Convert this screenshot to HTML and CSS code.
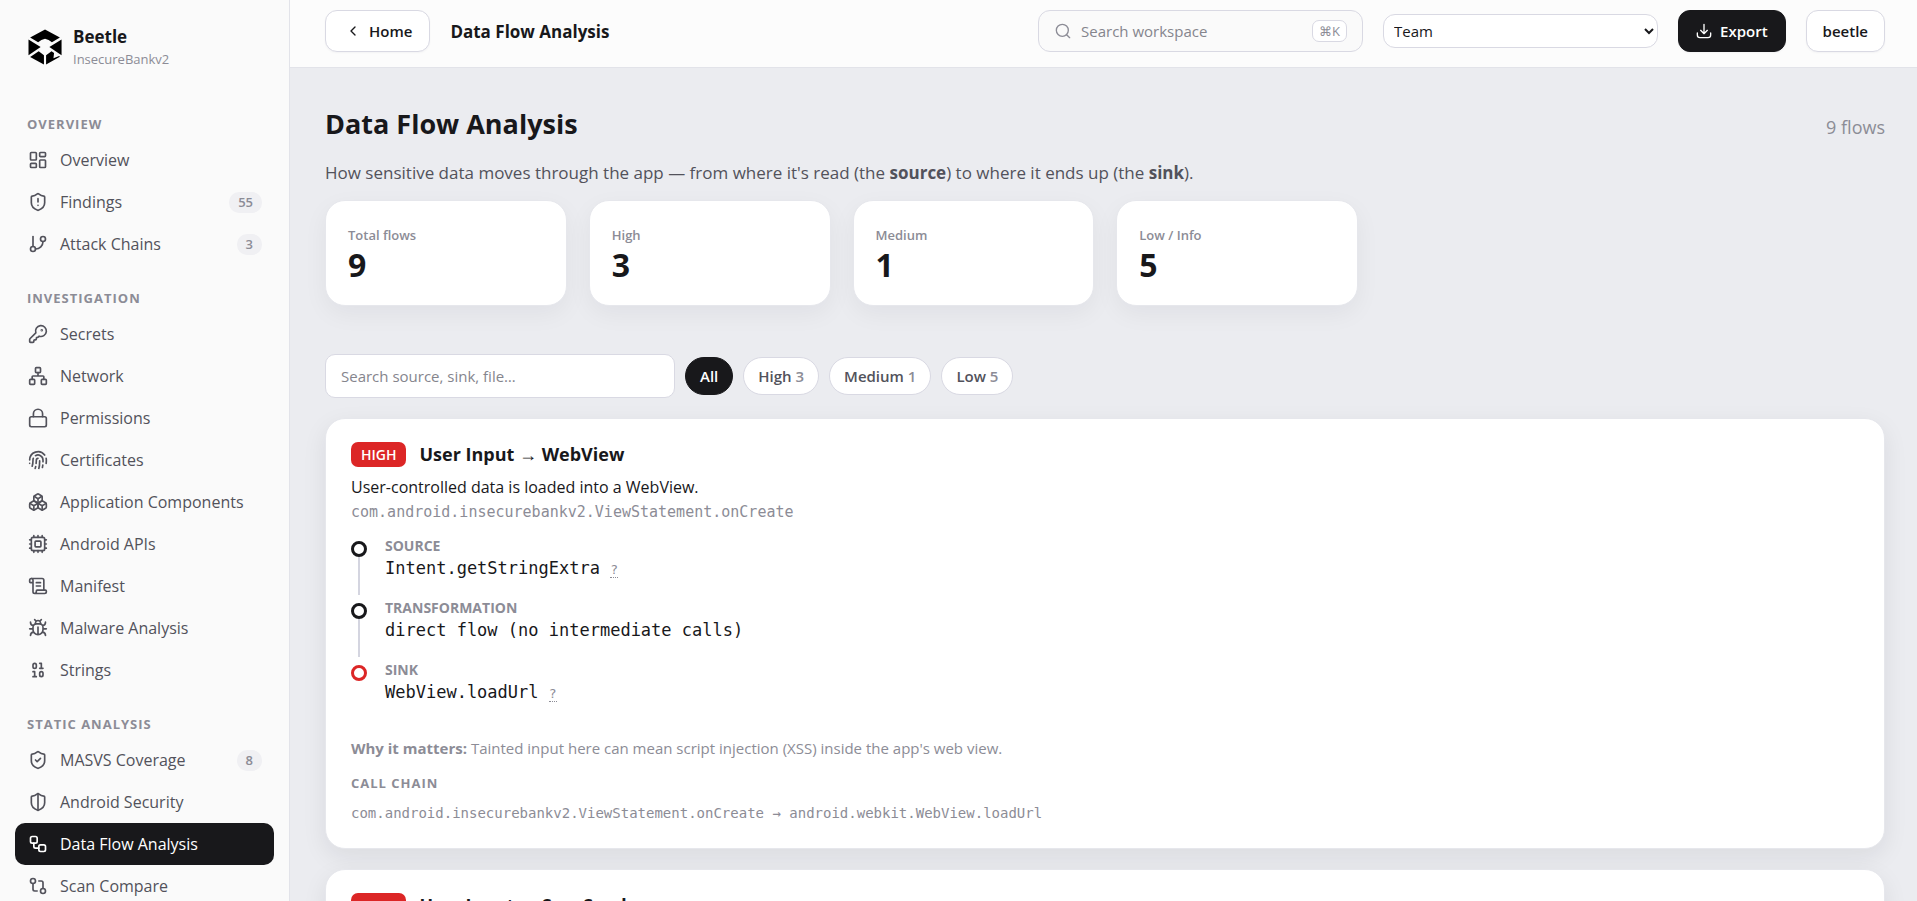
FILE: index.html
```html
<!DOCTYPE html>
<html lang="en">
<head>
<meta charset="UTF-8">
<meta name="viewport" content="width=device-width, initial-scale=1.0">
<title>Beetle - Data Flow Analysis</title>
<link rel="stylesheet" href="styles.css">
</head>
<body>
  <aside class="sidebar">
    <div class="brand">
      <svg class="brand-logo" viewBox="0 0 36 36" aria-hidden="true">
        <path d="M2.2 8.2 17.5 0l15.3 8.2-8.2 5-3.4-2.4-3.7-1.3-3.7 1.3-3.4 2.4z"/>
        <path d="M.5 10.4 13 18 .5 26.6z"/>
        <path d="M34.5 10.4 22 18l12.500 8.600z"/>
        <path d="M2.200 28.200 11 22.400l5.400 4.200V36z"/>
        <path d="M18.600 36v-9.400l5.600-4.200 2.600 1.800-.6 5.300 5.800-2.300.8.800z"/>
      </svg>
      <div>
        <div class="brand-name">Beetle</div>
        <div class="brand-app">InsecureBankv2</div>
      </div>
    </div>

    <nav>
      <h2 class="nav-label">Overview</h2>
      <a class="nav-item" href="#">
        <svg class="icon" viewBox="0 0 24 24"><rect width="7" height="9" x="3" y="3" rx="1"/><rect width="7" height="5" x="14" y="3" rx="1"/><rect width="7" height="9" x="14" y="12" rx="1"/><rect width="7" height="5" x="3" y="16" rx="1"/></svg>
        <span>Overview</span>
      </a>
      <a class="nav-item" href="#">
        <svg class="icon" viewBox="0 0 24 24"><path d="M20 13c0 5-3.500 7.500-7.660 8.950a1 1 0 0 1-.67-.01C7.500 20.500 4 18 4 13V6a1 1 0 0 1 1-1c2 0 4.500-1.200 6.240-2.720a1.170 1.170 0 0 1 1.520 0C14.510 3.810 17 5 19 5a1 1 0 0 1 1 1z"/><path d="M12 8v4M12 16h.01"/></svg>
        <span>Findings</span>
        <span class="count">55</span>
      </a>
      <a class="nav-item" href="#">
        <svg class="icon" viewBox="0 0 24 24"><path d="M6 3v12"/><circle cx="18" cy="6" r="3"/><circle cx="6" cy="18" r="3"/><path d="M18 9a9 9 0 0 1-9 9"/></svg>
        <span>Attack Chains</span>
        <span class="count">3</span>
      </a>

      <h2 class="nav-label">Investigation</h2>
      <a class="nav-item" href="#">
        <svg class="icon" viewBox="0 0 24 24"><path d="M2.586 17.414A2 2 0 0 0 2 18.828V21a1 1 0 0 0 1 1h3a1 1 0 0 0 1-1v-1a1 1 0 0 1 1-1h1a1 1 0 0 0 1-1v-1a1 1 0 0 1 1-1h.172a2 2 0 0 0 1.414-.586l.814-.814a6.500 6.500 0 1 0-4-4z"/><circle cx="16.500" cy="7.500" r=".5"/></svg>
        <span>Secrets</span>
      </a>
      <a class="nav-item" href="#">
        <svg class="icon" viewBox="0 0 24 24"><rect x="16" y="16" width="6" height="6" rx="1"/><rect x="2" y="16" width="6" height="6" rx="1"/><rect x="9" y="2" width="6" height="6" rx="1"/><path d="M5 16v-3a1 1 0 0 1 1-1h12a1 1 0 0 1 1 1v3M12 12V8"/></svg>
        <span>Network</span>
      </a>
      <a class="nav-item" href="#">
        <svg class="icon" viewBox="0 0 24 24"><rect width="20" height="12" x="2" y="10.500" rx="2"/><path d="M6.500 10.500V7a5.500 5.500 0 0 1 11 0v3.500"/></svg>
        <span>Permissions</span>
      </a>
      <a class="nav-item" href="#">
        <svg class="icon" viewBox="0 0 24 24"><path d="M12 10a2 2 0 0 0-2 2c0 1.020-.1 2.510-.26 4M14 13.120c0 2.380 0 6.380-1 8.880M17.290 21.020c.12-.6.43-2.300.5-3.020M2 12a10 10 0 0 1 18-6M2 16h.01M21.800 16c.2-2 .131-5.354 0-6M5 19.500C5.500 18 6 15 6 12a6 6 0 0 1 .34-2M8.650 22c.21-.66.45-1.320.57-2M9 6.800a6 6 0 0 1 9 5.200v2"/></svg>
        <span>Certificates</span>
      </a>
      <a class="nav-item" href="#">
        <svg class="icon" viewBox="0 0 24 24"><path d="M2.970 12.920A2 2 0 0 0 2 14.630v3.240a2 2 0 0 0 .97 1.710l3 1.800a2 2 0 0 0 2.060 0L12 19v-5.500l-5-3-4.030 2.420Z"/><path d="m7 16.500-4.740-2.850M7 16.500l5-3M7 16.500v5.170"/><path d="M12 13.500V19l3.970 2.380a2 2 0 0 0 2.060 0l3-1.800a2 2 0 0 0 .97-1.710v-3.240a2 2 0 0 0-.97-1.710L17 10.500l-5 3Z"/><path d="m17 16.500-5-3M17 16.500l4.740-2.850M17 16.500v5.170"/><path d="M7.970 4.420A2 2 0 0 0 7 6.130v4.370l5 3 5-3V6.130a2 2 0 0 0-.97-1.710l-3-1.800a2 2 0 0 0-2.060 0l-3 1.800Z"/><path d="M12 8 7.260 5.150M12 8l4.740-2.850M12 13.500V8"/></svg>
        <span>Application Components</span>
      </a>
      <a class="nav-item" href="#">
        <svg class="icon" viewBox="0 0 24 24"><rect x="4" y="4" width="16" height="16" rx="2"/><rect x="8.500" y="8.500" width="7" height="7" rx="1"/><path d="M17 20v2M17 2v2M12 20v2M12 2v2M7 20v2M7 2v2M2 12h2M2 17h2M2 7h2M20 12h2M20 17h2M20 7h2"/></svg>
        <span>Android APIs</span>
      </a>
      <a class="nav-item" href="#">
        <svg class="icon" viewBox="0 0 24 24"><path d="M15 12h-5M15 8h-5M19 17V5a2 2 0 0 0-2-2H4"/><path d="M8 21h12a2 2 0 0 0 2-2v-1a1 1 0 0 0-1-1H11a1 1 0 0 0-1 1v1a2 2 0 1 1-4 0V5a2 2 0 1 0-4 0v2a1 1 0 0 0 1 1h3"/></svg>
        <span>Manifest</span>
      </a>
      <a class="nav-item" href="#">
        <svg class="icon" viewBox="0 0 24 24"><path d="m8 2 1.880 1.880M14.120 3.880 16 2M9 7.130v-1a3.003 3.003 0 1 1 6 0v1"/><path d="M12 20c-3.300 0-6-2.700-6-6v-3a4 4 0 0 1 4-4h4a4 4 0 0 1 4 4v3c0 3.300-2.700 6-6 6M12 20v-9M6.530 9C4.600 8.800 3 7.100 3 5M6 13H2M3 21c0-2.100 1.700-3.900 3.800-4M20.970 5c0 2.100-1.600 3.800-3.500 4M22 13h-4M17.200 17c2.100.1 3.800 1.900 3.800 4"/></svg>
        <span>Malware Analysis</span>
      </a>
      <a class="nav-item" href="#">
        <svg class="icon" viewBox="0 0 24 24"><rect x="14" y="14" width="4" height="6" rx="2"/><rect x="6" y="4" width="4" height="6" rx="2"/><path d="M6 20h4M14 10h4M6 14h2v6M14 4h2v6"/></svg>
        <span>Strings</span>
      </a>

      <h2 class="nav-label">Static Analysis</h2>
      <a class="nav-item" href="#">
        <svg class="icon" viewBox="0 0 24 24"><path d="M20 13c0 5-3.500 7.500-7.660 8.950a1 1 0 0 1-.67-.01C7.500 20.500 4 18 4 13V6a1 1 0 0 1 1-1c2 0 4.500-1.200 6.240-2.720a1.170 1.170 0 0 1 1.520 0C14.510 3.810 17 5 19 5a1 1 0 0 1 1 1z"/><path d="m9 12 2 2 4-4"/></svg>
        <span>MASVS Coverage</span>
        <span class="count">8</span>
      </a>
      <a class="nav-item" href="#">
        <svg class="icon" viewBox="0 0 24 24"><path d="M20 13c0 5-3.500 7.500-7.660 8.950a1 1 0 0 1-.67-.01C7.500 20.500 4 18 4 13V6a1 1 0 0 1 1-1c2 0 4.500-1.200 6.240-2.720a1.170 1.170 0 0 1 1.520 0C14.510 3.810 17 5 19 5a1 1 0 0 1 1 1z"/><path d="M12 22V2"/></svg>
        <span>Android Security</span>
      </a>
      <a class="nav-item active" href="#" aria-current="page">
        <svg class="icon" viewBox="0 0 24 24"><rect width="8" height="8" x="3" y="3" rx="2"/><path d="M7 11v4a2 2 0 0 0 2 2h4"/><rect width="8" height="8" x="13" y="13" rx="2"/></svg>
        <span>Data Flow Analysis</span>
      </a>
      <a class="nav-item" href="#">
        <svg class="icon" viewBox="0 0 24 24"><circle cx="18" cy="18" r="3"/><circle cx="6" cy="6" r="3"/><path d="M13 6h3a2 2 0 0 1 2 2v7M11 18H8a2 2 0 0 1-2-2V9"/></svg>
        <span>Scan Compare</span>
      </a>
    </nav>
  </aside>

  <div class="page">
    <header class="topbar">
      <button class="btn btn-home" type="button">
        <svg class="icon icon-sm" viewBox="0 0 24 24"><path d="m15 18-6-6 6-6"/></svg>
        Home
      </button>
      <div class="topbar-title">Data Flow Analysis</div>
      <label class="search">
        <svg class="icon icon-sm" viewBox="0 0 24 24"><circle cx="11" cy="11" r="9"/><path d="m22 22-4.500-4.500"/></svg>
        <input type="text" placeholder="Search workspace" aria-label="Search workspace">
        <kbd>⌘K</kbd>
      </label>
      <select class="team" aria-label="Team">
        <option>Team</option>
      </select>
      <button class="btn btn-dark" type="button">
        <svg class="icon icon-sm" viewBox="0 0 24 24"><path d="M22 15v3a4 4 0 0 1-4 4H6a4 4 0 0 1-4-4v-3M7 11l5 5 5-5M12 16V2"/></svg>
        Export
      </button>
      <button class="btn" type="button">beetle</button>
    </header>

    <main class="content">
      <div class="page-head">
        <h1>Data Flow Analysis</h1>
        <span class="flow-total">9 flows</span>
      </div>
      <p class="intro">How sensitive data moves through the app — from where it's read (the <strong>source</strong>) to where it ends up (the <strong>sink</strong>).</p>

      <section class="stats">
        <div class="stat"><div class="stat-label">Total flows</div><div class="stat-value">9</div></div>
        <div class="stat"><div class="stat-label">High</div><div class="stat-value">3</div></div>
        <div class="stat"><div class="stat-label">Medium</div><div class="stat-value">1</div></div>
        <div class="stat"><div class="stat-label">Low / Info</div><div class="stat-value">5</div></div>
      </section>

      <div class="filters">
        <input class="filter-input" type="text" placeholder="Search source, sink, file…" aria-label="Search flows">
        <button class="chip selected" type="button">All</button>
        <button class="chip" type="button">High <span>3</span></button>
        <button class="chip" type="button">Medium <span>1</span></button>
        <button class="chip" type="button">Low <span>5</span></button>
      </div>

      <article class="flow">
        <div class="flow-head">
          <span class="severity">HIGH</span>
          <h3>User Input → WebView</h3>
        </div>
        <p class="flow-desc">User-controlled data is loaded into a WebView.</p>
        <div class="flow-where">com.android.insecurebankv2.ViewStatement.onCreate</div>

        <ol class="steps">
          <li class="step">
            <div class="step-label">Source</div>
            <div class="step-code">Intent.getStringExtra <abbr title="Reads a string passed in by the calling Intent">?</abbr></div>
          </li>
          <li class="step">
            <div class="step-label">Transformation</div>
            <div class="step-code">direct flow (no intermediate calls)</div>
          </li>
          <li class="step sink">
            <div class="step-label">Sink</div>
            <div class="step-code">WebView.loadUrl <abbr title="Loads the given URL in the web view">?</abbr></div>
          </li>
        </ol>

        <p class="why"><strong>Why it matters:</strong> Tainted input here can mean script injection (XSS) inside the app's web view.</p>
        <h4>Call chain</h4>
        <div class="chain">com.android.insecurebankv2.ViewStatement.onCreate → android.webkit.WebView.loadUrl</div>
      </article>

      <article class="flow">
        <div class="flow-head">
          <span class="severity">HIGH</span>
          <h3>User Input → Sms Send</h3>
        </div>
      </article>
    </main>
  </div>
</body>
</html>
```

FILE: styles.css
```css
*,
*::before,
*::after {
  box-sizing: border-box;
}

body {
  margin: 0;
  height: 100vh;
  display: flex;
  overflow: hidden;
  font-family: "Open Sans", "Noto Sans", sans-serif;
  font-size: 16px;
  color: #18181b;
  background: #ebecf0;
}

h1, h2, h3, h4, p, ol {
  margin: 0;
  padding: 0;
}

button, input, select {
  font-family: inherit;
  color: inherit;
}

.icon {
  width: 20px;
  height: 20px;
  flex: none;
  fill: none;
  stroke: currentColor;
  stroke-width: 2;
  stroke-linecap: round;
  stroke-linejoin: round;
}

.icon-sm {
  width: 16px;
  height: 16px;
}

/* sidebar */
.sidebar {
  width: 290px;
  flex: none;
  padding: 24px 15px 0;
  background: #fafafa;
  border-right: 1px solid #e2e3e9;
  overflow: hidden;
}

.brand {
  display: flex;
  align-items: center;
  gap: 10px;
  height: 46px;
  padding-left: 13px;
  margin-bottom: 41px;
}

.brand-logo {
  width: 35px;
  height: 36px;
}

.brand-name {
  font-size: 17px;
  line-height: 24px;
  font-weight: 700;
}

.brand-app {
  font-size: 13px;
  line-height: 20px;
  color: #8c8c96;
}

.nav-label {
  padding: 0 12px;
  height: 28px;
  line-height: 26px;
  font-size: 13px;
  font-weight: 700;
  letter-spacing: 1px;
  text-transform: uppercase;
  color: #8c8c96;
}

.nav-item + .nav-label {
  margin-top: 20px;
}

.nav-item {
  display: flex;
  align-items: center;
  gap: 12px;
  height: 42px;
  padding: 0 12px 0 13px;
  border-radius: 10px;
  color: #52525b;
  text-decoration: none;
}

.nav-item.active {
  background: #18181b;
  color: #fff;
}

.count {
  margin-left: auto;
  padding: 0 9px;
  border-radius: 10px;
  background: #f0f0f3;
  color: #8c8c96;
  font-size: 13px;
  line-height: 21px;
  font-weight: 600;
}

/* top bar */
.page {
  flex: 1;
  min-width: 0;
}

.topbar {
  display: flex;
  align-items: center;
  gap: 20px;
  height: 68px;
  padding: 0 32px 5px 35px;
  background: #fcfcfc;
  border-bottom: 1px solid #e2e3e9;
}

.topbar-title {
  margin-right: auto;
  font-size: 17px;
  font-weight: 700;
}

.btn {
  display: flex;
  align-items: center;
  gap: 8px;
  height: 42px;
  padding: 0 16px;
  border: 1px solid #d9d9e3;
  border-radius: 12px;
  background: #fff;
  font-size: 15px;
  font-weight: 600;
  box-shadow: 0 1px 2px rgba(20, 20, 40, 0.04);
}

.btn-home {
  padding: 0 17px 0 19px;
}

.btn-dark {
  padding: 0 17px;
  background: #18181b;
  border-color: #18181b;
  color: #fff;
}

.search {
  display: flex;
  align-items: center;
  gap: 10px;
  width: 325px;
  height: 42px;
  padding: 0 15px 0 16px;
  border: 1px solid #d9d9e3;
  border-radius: 12px;
  background: #fafafa;
  color: #8c8c96;
}

.search input {
  flex: 1;
  min-width: 0;
  padding: 0;
  border: 0;
  outline: 0;
  background: none;
  font-size: 15px;
}

input::placeholder {
  color: #85858d;
}

.search kbd {
  padding: 0 6px;
  border: 1px solid #d9d9e3;
  border-radius: 7px;
  background: #fff;
  font-family: inherit;
  font-size: 13px;
  line-height: 20px;
}

.team {
  width: 275px;
  height: 34px;
  padding: 0 6px;
  border: 1px solid #d9d9e3;
  border-radius: 12px;
  background: #fff;
  font-size: 15px;
}

/* content */
.content {
  padding: 32px 32px 0 35px;
}

.page-head {
  display: flex;
  align-items: baseline;
  justify-content: space-between;
}

h1 {
  font-size: 27px;
  line-height: 48px;
  font-weight: 700;
}

.flow-total {
  font-size: 18px;
  line-height: 24px;
  color: #8c8c96;
}

.intro {
  margin-top: 12px;
  font-size: 17px;
  line-height: 26px;
  color: #52525b;
}

.stats {
  display: grid;
  grid-template-columns: repeat(4, 1fr);
  gap: 22px;
  max-width: 1033px;
  margin-top: 14px;
}

.stat {
  padding: 23px 22px 21px;
  border: 1px solid #e6e7ec;
  border-radius: 20px;
  background: #fff;
  box-shadow: 0 8px 24px rgba(20, 20, 40, 0.05);
}

.stat-label {
  font-size: 13px;
  line-height: 22px;
  font-weight: 600;
  color: #8c8c96;
}

.stat-value {
  font-size: 32px;
  line-height: 38px;
  font-weight: 700;
}

.filters {
  display: flex;
  align-items: center;
  gap: 10px;
  margin: 48px 0 20px;
}

.filter-input {
  width: 350px;
  height: 44px;
  padding: 0 15px;
  border: 1px solid #d9d9e3;
  border-radius: 10px;
  background: #fff;
  font-size: 15px;
}

.chip {
  height: 38px;
  padding: 0 14px;
  border: 1px solid #d9d9e3;
  border-radius: 19px;
  background: #fff;
  font-size: 15px;
  font-weight: 600;
  color: #52525b;
}

.chip span {
  color: #8c8c96;
}

.chip.selected {
  background: #18181b;
  border-color: #18181b;
  color: #fff;
}

/* flow cards */
.flow {
  margin-bottom: 20px;
  padding: 23px 25px 24px;
  border: 1px solid #e6e7ec;
  border-radius: 20px;
  background: #fff;
  box-shadow: 0 8px 24px rgba(20, 20, 40, 0.08);
}

.flow-head {
  display: flex;
  align-items: center;
  gap: 13px;
}

.severity {
  padding: 0 10px;
  border-radius: 7px;
  background: #dc2626;
  color: #fff;
  font-size: 14px;
  line-height: 25px;
  font-weight: 600;
}

h3 {
  font-size: 18px;
  line-height: 25px;
  font-weight: 700;
}

.flow-desc {
  margin-top: 7px;
  font-size: 16px;
  line-height: 26px;
}

.flow-where,
.step-code,
.chain {
  font-family: "DejaVu Sans Mono", "Liberation Mono", monospace;
}

.flow-where {
  font-size: 15px;
  line-height: 24px;
  color: #8c8c96;
}

.steps {
  margin-top: 11px;
  list-style: none;
}

.step {
  position: relative;
  min-height: 62px;
  padding-left: 34px;
}

/* ring on the timeline */
.step::before {
  content: "";
  position: absolute;
  left: 0;
  top: 6px;
  width: 16px;
  height: 16px;
  border: 3px solid #18181b;
  border-radius: 50%;
}

.step::after {
  content: "";
  position: absolute;
  left: 7px;
  top: 22px;
  bottom: 2px;
  width: 2px;
  background: #d4d5e0;
}

.step.sink::before {
  border-color: #dc2626;
}

.step.sink::after {
  display: none;
}

.step-label {
  font-size: 14px;
  line-height: 22px;
  font-weight: 700;
  text-transform: uppercase;
  color: #8c8c96;
}

.step-code {
  font-size: 17px;
  line-height: 22px;
}

.step-code abbr {
  font-size: 13px;
  color: #8c8c96;
  text-decoration: none;
  border-bottom: 1px dotted #8c8c96;
}

.why {
  margin-top: 15px;
  font-size: 15px;
  line-height: 24px;
  color: #8c8c96;
}

h4 {
  margin-top: 12px;
  font-size: 13px;
  line-height: 22px;
  font-weight: 700;
  letter-spacing: 1px;
  text-transform: uppercase;
  color: #8c8c96;
}

.chain {
  margin-top: 8px;
  font-size: 14px;
  line-height: 22px;
  color: #8c8c96;
}
```
